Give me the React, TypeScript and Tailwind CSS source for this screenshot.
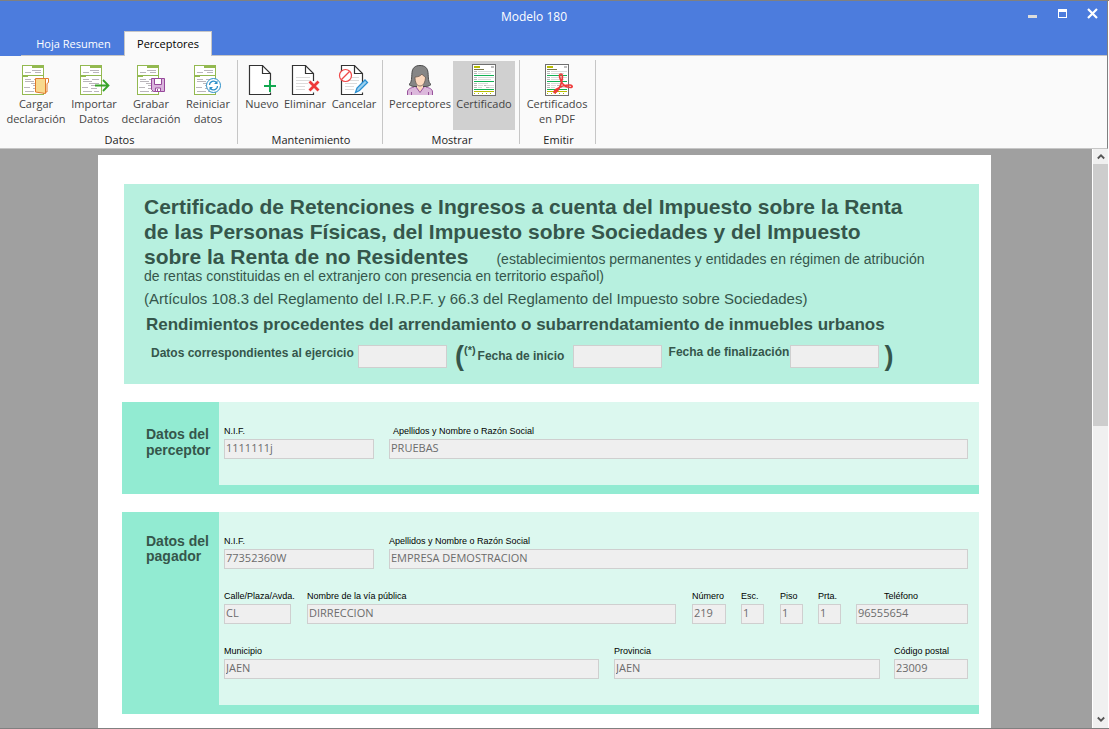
import type { ReactNode } from "react";

const separatorCls = "w-px self-stretch my-1 bg-[#c6c6c6]";

function FormSheet({ children }: { children: ReactNode }) {
    return (
        <svg className="w-8 h-8" viewBox="0 0 32 32" fill="none" aria-hidden="true">
            <rect x="2.5" y="1.5" width="21" height="29" fill="#fff" stroke="#93b950" />
            <path d="M12 1h12v3H12z M2 11h22v1H2z M2 11h6v2H2z" fill="#93b950" />
            <path d="M12 6.500h9 M5 8.500h6 M15 8.500h6 M5 15.500h6 M14 15.500h7 M5 17.500h9 M11 19.500h10 M13 21.500h8 M4 23.500h6 M13 24.500h6 M5 27.500h9 M16 27.500h5" stroke="#bab6bb" />
            {children}
        </svg>
    );
}

const LoadIcon = () => (
    <FormSheet>
        <path d="M15.500 14.500h10v15l-10-1.500z" fill="#f8d98e" stroke="#e07a2c" />
        <path d="M25.500 14.500h3v4l-1.500 1v8.500h-1.500z" fill="#fff" stroke="#e07a2c" />
    </FormSheet>
);

const ImportIcon = () => (
    <FormSheet>
        <path d="M17 21.500h13 M25 16l5.500 5.500L25 27" stroke="#37a329" strokeWidth="1.8" />
    </FormSheet>
);

const SaveIcon = () => (
    <FormSheet>
        <path d="M16.500 14.500h13v13h-11l-2-2z" fill="#d9b3dc" stroke="#97489b" />
        <path d="M19.500 14.500h7v6h-7z" fill="#fff" stroke="#97489b" />
        <path d="M20.500 24h5v3.500h-5z" fill="#fff" stroke="#97489b" />
        <path d="M22 25h1v2h-1z" fill="#97489b" />
    </FormSheet>
);

const ResetIcon = () => (
    <FormSheet>
        <circle cx="21.500" cy="21.500" r="7" fill="#fff" stroke="#2a8fc9" />
        <path d="M17.500 21a4 4 0 0 1 7-2.500M25.500 22a4 4 0 0 1-7 2.500" stroke="#2a8fc9" strokeWidth="1.200" />
        <path d="M25.500 16.500v3.500h-3.500z M17.500 26.500V23H21z" fill="#2a8fc9" />
    </FormSheet>
);

function Page({ lined, children }: { lined?: boolean; children: ReactNode }) {
    return (
        <svg className="w-8 h-8" viewBox="0 0 32 32" fill="none" aria-hidden="true">
            <path d="M24.500 20V9.500L16.500 1.500h-13v29h21v-2" fill="#fff" stroke="#333" strokeWidth="1.200" />
            <path d="M16.500 1.500v8h8" stroke="#333" strokeWidth="1.200" />
            {lined && <path d="M7 13.500h14 M7 16.500h14 M7 19.500h12 M7 22.500h9 M7 25.500h9" stroke="#dcdcdc" />}
            {children}
        </svg>
    );
}

const NewIcon = () => (
    <Page>
        <path d="M22 17h4v10h-4z" fill="#fafafa" />
        <path d="M18 22h12 M24 16v12" stroke="#12a84f" strokeWidth="2" />
    </Page>
);

const DeleteIcon = () => (
    <Page lined>
        <path d="M19 17h11v11H19z" fill="#fafafa" />
        <path d="M20.500 17.500l9 9 M29.500 17.500l-9 9" stroke="#ee3a3a" strokeWidth="2.800" />
    </Page>
);

const CancelIcon = () => (
    <Page lined>
        <circle cx="7.500" cy="11.500" r="6" fill="#fff" stroke="#f04848" strokeWidth="1.200" />
        <path d="M3.500 15.500l8-8" stroke="#f04848" strokeWidth="1.200" />
        <path d="M17.500 28.500l1.500-4.500 8-8 2.500 2.500-8 8z" fill="#9bd0f0" stroke="#2a8fd0" strokeWidth="1.300" />
    </Page>
);

const WomanIcon = () => (
    <svg className="w-8 h-8" viewBox="0 0 32 32" fill="none" aria-hidden="true">
        <path d="M3.500 31v-3c0-3 3-4 6.500-5h12c3.500 1 6.500 2 6.500 5v3z" fill="#dcb8dc" />
        <path d="M3.500 31v-3c0-3 3-4 6.500-5 M22 23c3.500 1 6.500 2 6.500 5v3 M7.500 28v3 M24.500 28v3" stroke="#98539c" />
        <path d="M5 20.500c3-2 2.500-7 3-12C8.500 4 11 1.500 16 1.500S23.500 4 24 8.500c.5 5 0 10 3 12-2 1.800-4 2-7 2h-8c-3 0-5-.2-7-2z" fill="#868686" stroke="#4a4a4a" />
        <path d="M13 20.500v3l3 4.500 3-4.500v-3z" fill="#fcd8bd" />
        <path d="M11 13c3 0 5.500-1 7-3 1 1.500 2 2.500 3.500 3-.2 5-2 9-5.500 9s-5-4-5-9z" fill="#fcd8bd" stroke="#6a5a52" strokeWidth=".8" />
        <path d="M12 23l4 5.500 4-5.500" stroke="#98539c" />
    </svg>
);

function CertificateSheet({ children }: { children?: ReactNode }) {
    return (
        <svg className="w-8 h-8" viewBox="0 0 32 32" fill="none" aria-hidden="true">
            <rect x="4.500" y=".5" width="23" height="31" fill="#fff" stroke="#707070" />
            <path d="M6 2h6v2H6z" fill="#b8bd00" />
            <path d="M23 2h3v2h-3z" fill="#bdbdbd" />
            <path d="M6 5.500h10" stroke="#77774a" />
            <path d="M6 27.500h20" stroke="#b8bd00" />
            <path d="M6 11.500h20 M6 17.500h20 M6 25.500h20" stroke="#12b155" />
            <path d="M10 7.500h16 M10 9.500h13 M10 13.500h16 M10 15.500h13 M10 19.500h10 M10 21.500h5 M18 21.500h8 M10 23.500h4 M21 23.500h5" stroke="#dadada" />
            <path d="M6 7.500h3 M6 9.500h3 M6 13.500h3 M6 15.500h3 M6 19.500h3 M6 21.500h3 M16 21.500h2 M6 23.500h3 M18 23.500h3" stroke="#b8b8b8" />
            <path d="M6 29.500h18" stroke="#b8bd00" strokeDasharray="1 3" />
            {children}
        </svg>
    );
}

const PdfIcon = () => (
    <CertificateSheet>
        <path d="M20 10c-2 0-2 2.500 0 7s5.500 6.500 9.500 6.500c2.500 0 2-2.500-.5-2.500-5 0-10 1.500-14 4.500-3 2.500-2 4 0 2.500 2.500-2 5-7 6-12 .7-3.500.5-6-1-6z" stroke="#ee3a3a" strokeWidth="1.700" />
    </CertificateSheet>
);

function RibbonButton({ icon, lines, cls, active }: { icon: ReactNode; lines: string[]; cls: string; active?: boolean }) {
    return (
        <button type="button" aria-pressed={active} className={`flex flex-col items-center pt-[3px] h-[69px] text-[#444] leading-[15px] ${active ? "bg-[#d0d0d0]" : ""} ${cls}`}>
            {icon}
            <span className="flex flex-col items-center whitespace-nowrap">
                {lines.map(l => <span key={l}>{l}</span>)}
            </span>
        </button>
    );
}

function RibbonGroup({ title, cls, children }: { title: string; cls?: string; children: ReactNode }) {
    return (
        <section className="flex flex-col pt-[5px]">
            <div className={`flex ${cls ?? ""}`}>{children}</div>
            <h2 className="text-center text-[#222] leading-4 pt-0.5 pl-0.5">{title}</h2>
        </section>
    );
}

const boxCls = "h-5 min-w-0 border border-[#cfcfcf] bg-[#efefef] px-px pb-[3px] text-[11px] text-[#6c6c6c] outline-none";

function Field({ id, label, value, cls, labelCls }: { id: string; label: string; value: string; cls: string; labelCls?: string }) {
    return (
        <div className={`flex flex-col min-w-0 ${cls}`}>
            <label htmlFor={id} className={`font-['Liberation_Sans',Arial,sans-serif] text-[9px] leading-3 pb-0.5 whitespace-nowrap text-black ${labelCls ?? ""}`}>{label}</label>
            <input id={id} className={`${boxCls} w-full`} defaultValue={value} readOnly />
        </div>
    );
}

function Block({ title, cls, children }: { title: ReactNode; cls: string; children: ReactNode }) {
    return (
        <section className="flex ml-6 mr-3 mt-[18px] bg-[#92ebd2]">
            <h2 className={`w-[97px] shrink-0 pl-6 font-['Liberation_Sans',Arial,sans-serif] font-bold text-sm text-[#35564b] ${cls}`}>{title}</h2>
            <div className="flex-1 min-w-0 flex flex-col mb-[9px] pl-[5px] pr-[11px] pt-[23px] bg-[#dcf8ef]">{children}</div>
        </section>
    );
}

export default function App() {
    return (
        <div className="h-screen flex flex-col overflow-hidden border-y border-[#808080] bg-white font-['Open_Sans','Noto_Sans',sans-serif] text-[11px]">
            {/* Title bar and tabs */}
            <header className="flex flex-col h-[55px] shrink-0 mr-px border-r border-[#808080] bg-[#4c7cdd] text-white">
                <div className="flex h-[30px]">
                    <h1 className="flex-1 pl-10 pt-2 text-center text-xs leading-4">Modelo 180</h1>
                    <div className="flex items-start gap-[18px] pt-1.5 pr-[9px]">
                        <button type="button" aria-label="Minimizar" className="h-3 flex items-end pb-px"><span className="block w-[9px] h-[3px] bg-[#dcdcdc]" /></button>
                        <button type="button" aria-label="Maximizar" className="h-3 flex items-center pl-[3px]"><span className="block w-[9px] h-[9px] border border-t-[3px] border-white" /></button>
                        <button type="button" aria-label="Cerrar" className="h-3 flex items-center pl-0.5">
                            <svg className="w-[11px] h-[11px]" viewBox="0 0 11 11" aria-hidden="true"><path d="M1 1l9 9 M10 1l-9 9" stroke="#fff" strokeWidth="2.200" /></svg>
                        </button>
                    </div>
                </div>
                <nav className="flex h-[25px] ml-[21px] border-b border-[#c6c6c6]">
                    <button type="button" className="w-[103px] pt-0.5 pl-0.5 text-center">Hoja Resumen</button>
                    <button type="button" className="w-[88px] h-[25px] shrink-0 border border-b-0 border-[#c6c6c6] bg-[#fafafa] text-center text-black">Perceptores</button>
                </nav>
            </header>

            {/* Ribbon */}
            <div className="flex h-[93px] shrink-0 mr-px border-r border-r-[#808080] border-b border-b-[#c6c6c6] bg-[#fafafa]">
                <RibbonGroup title="Datos" cls="pl-[7px]">
                    <RibbonButton cls="w-[58px]" icon={<LoadIcon />} lines={["Cargar", "declaración"]} />
                    <RibbonButton cls="w-[58px]" icon={<ImportIcon />} lines={["Importar", "Datos"]} />
                    <RibbonButton cls="w-[56px]" icon={<SaveIcon />} lines={["Grabar", "declaración"]} />
                    <RibbonButton cls="w-[58px]" icon={<ResetIcon />} lines={["Reiniciar", "datos"]} />
                </RibbonGroup>
                <div className={separatorCls} />
                <RibbonGroup title="Mantenimiento" cls="pl-[3px] pr-px">
                    <RibbonButton cls="w-[42px]" icon={<NewIcon />} lines={["Nuevo"]} />
                    <RibbonButton cls="w-[44px]" icon={<DeleteIcon />} lines={["Eliminar"]} />
                    <RibbonButton cls="w-[54px]" icon={<CancelIcon />} lines={["Cancelar"]} />
                </RibbonGroup>
                <div className={separatorCls} />
                <RibbonGroup title="Mostrar" cls="px-1">
                    <RibbonButton cls="w-[66px]" icon={<WomanIcon />} lines={["Perceptores"]} />
                    <RibbonButton cls="w-[62px]" icon={<CertificateSheet />} lines={["Certificado"]} active />
                </RibbonGroup>
                <div className={separatorCls} />
                <RibbonGroup title="Emitir" cls="pl-1 pr-[5px]">
                    <RibbonButton cls="w-[66px]" icon={<PdfIcon />} lines={["Certificados", "en PDF"]} />
                </RibbonGroup>
                <div className={separatorCls} />
            </div>

            <div className="flex flex-1 min-h-0 mr-px">
                <main className="flex-1 min-w-0 overflow-hidden bg-[#a0a0a0] pt-1.5 pl-[98px] pr-[101px]">
                    <div className="min-h-full bg-white pt-[29px] pb-4">
                        {/* Certificate heading */}
                        <section className="ml-[26px] mr-3 h-[200px] bg-[#b7f0df] pt-2.5 pl-5 text-[#35564b] font-['Liberation_Sans',Arial,sans-serif] whitespace-nowrap">
                            <h2 className="text-[21px] leading-[25px] font-bold">
                                Certificado de Retenciones e Ingresos a cuenta del Impuesto sobre la Renta<br />
                                de las Personas Físicas, del Impuesto sobre Sociedades y del Impuesto
                            </h2>
                            <div className="flex items-baseline gap-7 h-[25px]">
                                <h2 className="text-[21px] leading-[25px] font-bold">sobre la Renta de no Residentes</h2>
                                <p className="text-sm">(establecimientos permanentes y entidades en régimen de atribución</p>
                            </div>
                            <p className="text-sm leading-[15px]">de rentas constituidas en el extranjero con presencia en territorio español)</p>
                            <p className="text-[15px] leading-5 pt-[5px]">(Artículos 108.3 del Reglamento del I.R.P.F. y 66.3 del Reglamento del Impuesto sobre Sociedades)</p>
                            <h3 className="text-[17px] leading-5 pt-1.5 pl-0.5 font-bold">Rendimientos procedentes del arrendamiento o subarrendatamiento de inmuebles urbanos</h3>
                            <div className="flex items-center pt-[5px] pl-[7px] text-xs font-bold">
                                <label htmlFor="ejercicio" className="w-[207px] pb-1.5">Datos correspondientes al ejercicio</label>
                                <input id="ejercicio" className={`${boxCls} w-[89px] h-[23px]`} readOnly />
                                <span className="pl-2 text-[27px] leading-8">(</span>
                                <sup className="top-0 pb-3 text-[11px]">(*)</sup>
                                <label htmlFor="inicio" className="pl-0.5 w-[97px]">Fecha de inicio</label>
                                <input id="inicio" className={`${boxCls} w-[89px] h-[23px]`} readOnly />
                                <label htmlFor="fin" className="pl-[7px] w-[128px] pb-2">Fecha de finalización</label>
                                <input id="fin" className={`${boxCls} w-[89px] h-[23px]`} readOnly />
                                <span className="pl-1.5 text-[27px] leading-8">)</span>
                            </div>
                        </section>

                        <Block title={<>Datos del<br />perceptor</>} cls="pt-6 leading-4">
                            <div className="flex gap-[15px] pb-[26px]">
                                <Field id="perceptor-nif" label="N.I.F." value="1111111j" cls="w-[150px]" />
                                <Field id="perceptor-nombre" label="Apellidos y Nombre o Razón Social" value="PRUEBAS" cls="flex-1" labelCls="pl-1" />
                            </div>
                        </Block>

                        <Block title={<>Datos del<br />pagador</>} cls="pt-[22px] leading-[15px]">
                            <div className="flex gap-[15px] pb-[21px]">
                                <Field id="pagador-nif" label="N.I.F." value="77352360W" cls="w-[150px]" />
                                <Field id="pagador-nombre" label="Apellidos y Nombre o Razón Social" value="EMPRESA DEMOSTRACION" cls="flex-1" />
                            </div>
                            <div className="flex pb-[21px]">
                                <Field id="via" label="Calle/Plaza/Avda." value="CL" cls="w-[67px] mr-4" />
                                <Field id="via-nombre" label="Nombre de la vía pública" value="DIRRECCION" cls="flex-1 mr-4" />
                                <Field id="numero" label="Número" value="219" cls="w-[34px] mr-[15px]" />
                                <Field id="escalera" label="Esc." value="1" cls="w-[23px] mr-4" />
                                <Field id="piso" label="Piso" value="1" cls="w-[23px] mr-[15px]" />
                                <Field id="puerta" label="Prta." value="1" cls="w-[23px] mr-[15px]" />
                                <Field id="telefono" label="Teléfono" value="96555654" cls="w-[112px]" labelCls="pl-7" />
                            </div>
                            <div className="flex pb-[26px]">
                                <Field id="municipio" label="Municipio" value="JAEN" cls="flex-[375] mr-[15px]" />
                                <Field id="provincia" label="Provincia" value="JAEN" cls="flex-[266] mr-3.5" />
                                <Field id="cp" label="Código postal" value="23009" cls="w-[74px]" />
                            </div>
                        </Block>
                    </div>
                </main>

                {/* Scroll bar */}
                <div className="flex flex-col w-4 shrink-0 border-l border-white bg-[#f0f0f0]">
                    <button type="button" aria-label="Subir" className="h-[15px] flex items-center justify-center">
                        <svg className="w-2 h-2" viewBox="0 0 8 8" fill="none" aria-hidden="true"><path d="M.8 5.500L4 2.300l3.200 3.200" stroke="#555" strokeWidth="1.800" /></svg>
                    </button>
                    <div className="flex-1 flex flex-col">
                        <div className="h-[48%] bg-[#cdcdcd]" />
                    </div>
                    <button type="button" aria-label="Bajar" className="h-[19px] flex items-center justify-center">
                        <svg className="w-2 h-2" viewBox="0 0 8 8" fill="none" aria-hidden="true"><path d="M.8 2.500L4 5.700l3.200-3.200" stroke="#555" strokeWidth="1.800" /></svg>
                    </button>
                </div>
            </div>
        </div>
    );
}
